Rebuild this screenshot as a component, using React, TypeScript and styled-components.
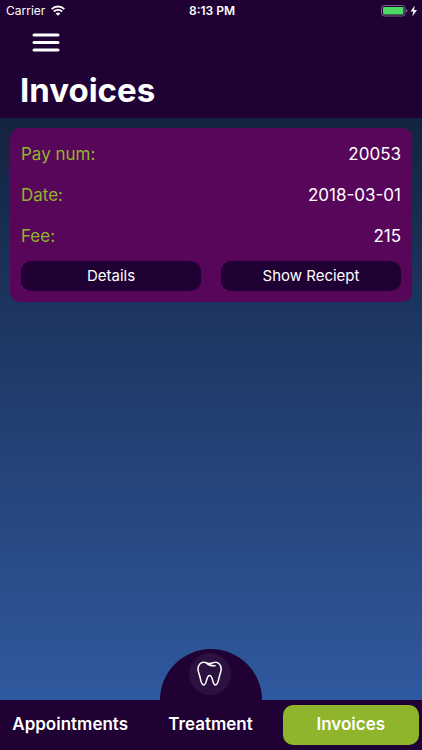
import React from "react";
import styled, { createGlobalStyle } from "styled-components";

const color = {
  ink: "#1f0133",
  card: "#58065a",
  green: "#8fb52c",
  white: "#ffffff",
};

const GlobalStyle = createGlobalStyle`
  *, *::before, *::after { box-sizing: border-box; }
  body {
    margin: 0;
    font-family: Inter, "Liberation Sans", sans-serif;
    color: ${color.white};
    background: ${color.ink};
  }
  button { font: inherit; color: inherit; border: 0; padding: 0; cursor: pointer; }
`;

const Screen = styled.div`
  min-height: 100vh;
  display: flex;
  flex-direction: column;
`;

const Header = styled.header`
  background: ${color.ink};
  padding-bottom: 8px;
`;

const StatusBar = styled.div`
  display: grid;
  grid-template-columns: 1fr auto 1fr;
  align-items: center;
  height: 22px;
  padding: 0 4px 0 6px;
  font-size: 12px;
  line-height: 22px;
`;

const Carrier = styled.div`
  display: flex;
  align-items: center;
  gap: 6px;
`;

const Clock = styled.time`
  font-weight: 600;
`;

const Power = styled.div`
  display: flex;
  align-items: center;
  justify-content: flex-end;
`;

const MenuButton = styled.button`
  display: block;
  margin: 8px 0 0 32px;
  height: 26px;
  background: none;

  svg { display: block; }
`;

const Title = styled.h1`
  margin: 14px 20px 0;
  font-size: 33px;
  line-height: 40px;
  font-weight: 700;
`;

const Content = styled.main`
  flex: 1;
  padding: 10px;
  background: linear-gradient(#14233f, #2f599f);
`;

const Card = styled.article`
  padding: 6px 11px 11px;
  border-radius: 10px;
  background: ${color.card};
`;

const Fields = styled.dl`
  margin: 0 0 4px;
`;

const Field = styled.div`
  display: flex;
  justify-content: space-between;
  font-size: 17px;
  line-height: 41px;
`;

const Label = styled.dt`
  color: ${color.green};
`;

const Value = styled.dd`
  margin: 0;
`;

const Actions = styled.div`
  display: grid;
  grid-template-columns: 1fr 1fr;
  gap: 20px;
`;

const ActionButton = styled.button`
  && {
    height: 30px;
    border-radius: 10px;
    background: ${color.ink};
    font-size: 15px;
    line-height: 30px;
  }
`;

const BottomBar = styled.nav`
  position: relative;
  display: grid;
  grid-template-columns: repeat(3, 1fr);
  gap: 4px;
  padding: 5px 3px 5px 2px;
  background: ${color.ink};
`;

const Tab = styled.button<{ $active?: boolean }>`
  && {
    height: 40px;
    padding-bottom: 3px;
    border-radius: 10px;
    background: ${(p) => (p.$active ? color.green : "transparent")};
    font-size: 17px;
    font-weight: 600;
    line-height: 24px;
  }
`;

const Dome = styled.button`
  && {
    position: absolute;
    left: 50%;
    bottom: 100%;
    transform: translateX(-50%);
    display: flex;
    justify-content: center;
    width: 102px;
    height: 51px;
    padding-top: 4px;
    border-radius: 51px 51px 0 0;
    background: ${color.ink};
  }
`;

const Badge = styled.span`
  display: flex;
  align-items: center;
  justify-content: center;
  width: 42px;
  height: 42px;
  margin-right: 3px;
  border-radius: 50%;
  background: #2b113f;
`;

const WifiIcon = () => (
  <svg width="14" height="12" viewBox="0 0 14 12" aria-hidden="true">
    <g fill="none" stroke="#fff" strokeWidth="1.9">
      <path d="M.7 4.1a9 9 0 0 1 12.6 0" />
      <path d="M2.900 6.500a5.900 5.900 0 0 1 8.200 0" />
    </g>
    <path d="M7 10.800 4.700 8.500a3.300 3.300 0 0 1 4.600 0z" fill="#fff" />
  </svg>
);

const BatteryIcon = () => (
  <svg width="37" height="12" viewBox="0 0 37 12" role="img" aria-label="Battery charging">
    <rect x=".5" y=".5" width="23.500" height="10.500" rx="2.600" fill="none" stroke="#78678a" />
    <rect x="2" y="2" width="20.500" height="7.500" rx="1" fill="#4cd964" />
    <path d="M25 4q1.500.5 1.500 1.800T25 7.600z" fill="#78678a" />
    <path d="M33.700 .5 29.600 6.500h2.700l-1 4.900 4.700-6.500h-3z" fill="#fff" />
  </svg>
);

const MenuIcon = () => (
  <svg width="28" height="26" viewBox="0 0 28 26" aria-hidden="true">
    <path
      d="M2 5h24M2 12.500h24M2 20h24"
      stroke="#fff"
      strokeWidth="3"
      strokeLinecap="round"
    />
  </svg>
);

const ToothIcon = () => (
  <svg width="26" height="26" viewBox="0 0 26 26" aria-hidden="true">
    <path
      d="M8.500 1.600C4 .4 1 3.600 1 8c0 2.800 1.300 5 2 8 .8 3.700 1.300 8 3.800 8 3.200 0 2.300-9.500 5.800-9.500s2.700 9.500 5.800 9.500c2.500 0 3-4.300 3.800-8 .7-3 2-5.200 2-8 0-4.400-3.200-7.600-7.500-6.400-1.600.5-2.700.9-4 .9s-2.600-.5-4.200-.9M9 1.700c2.600 2.500 5 3.600 9 3"
      fill="none"
      stroke="#fff"
      strokeWidth="1.500"
      strokeLinecap="round"
      strokeLinejoin="round"
    />
  </svg>
);

const invoice = [
  { label: "Pay num:", value: "20053" },
  { label: "Date:", value: "2018-03-01" },
  { label: "Fee:", value: "215" },
];

export default function App() {
  return (
    <Screen>
      <GlobalStyle />
      <Header>
        <StatusBar>
          <Carrier>
            Carrier
            <WifiIcon />
          </Carrier>
          <Clock>8:13 PM</Clock>
          <Power>
            <BatteryIcon />
          </Power>
        </StatusBar>
        <MenuButton type="button" aria-label="Menu">
          <MenuIcon />
        </MenuButton>
        <Title>Invoices</Title>
      </Header>
      <Content>
        <Card>
          <Fields>
            {invoice.map((f) => (
              <Field key={f.label}>
                <Label>{f.label}</Label>
                <Value>{f.value}</Value>
              </Field>
            ))}
          </Fields>
          <Actions>
            <ActionButton type="button">Details</ActionButton>
            <ActionButton type="button">Show Reciept</ActionButton>
          </Actions>
        </Card>
      </Content>
      <BottomBar>
        <Dome type="button" aria-label="Dental home">
          <Badge>
            <ToothIcon />
          </Badge>
        </Dome>
        <Tab type="button">Appointments</Tab>
        <Tab type="button">Treatment</Tab>
        <Tab type="button" $active aria-current="page">
          Invoices
        </Tab>
      </BottomBar>
    </Screen>
  );
}
